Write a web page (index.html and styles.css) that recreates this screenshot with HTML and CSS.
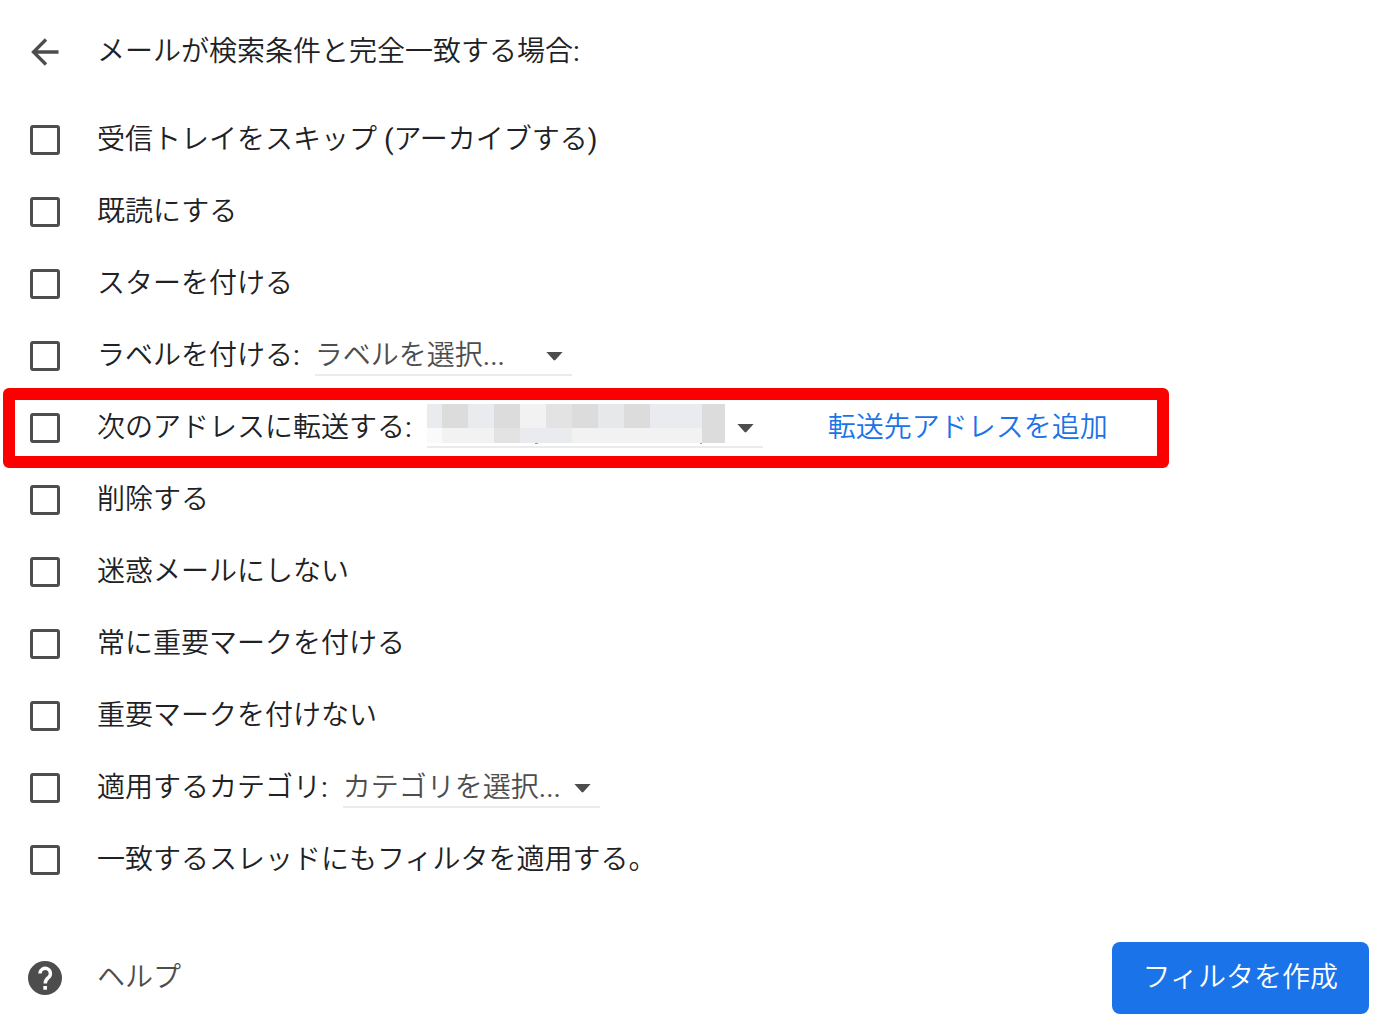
FILE: index.html
```html
<!DOCTYPE html>
<html lang="ja">
<head>
<meta charset="utf-8">
<meta name="viewport" content="width=device-width, initial-scale=1">
<title>フィルタを作成</title>
<link rel="stylesheet" href="styles.css">
</head>
<body>
<form class="filter">
  <header class="row header">
    <button class="icon-button" type="button" aria-label="戻る">
      <svg class="icon" viewBox="0 0 34 34" aria-hidden="true"><path d="M30.500 17H6M18 4.500L5.500 17L18 29.500" fill="none" stroke="#4d4d4d" stroke-width="3.300"/></svg>
    </button>
    <h1 class="text title">メールが検索条件と完全一致する場合:</h1>
  </header>

  <ul class="actions">
    <li class="row"><input class="check" type="checkbox" id="skip"><label class="text" for="skip">受信トレイをスキップ (アーカイブする)</label></li>
    <li class="row"><input class="check" type="checkbox" id="read"><label class="text" for="read">既読にする</label></li>
    <li class="row"><input class="check" type="checkbox" id="star"><label class="text" for="star">スターを付ける</label></li>
    <li class="row">
      <input class="check" type="checkbox" id="label"><label class="text" for="label">ラベルを付ける:</label>
      <span class="picker">
        <select class="select" aria-label="ラベル"><option>ラベルを選択...</option></select>
        <svg class="arrow" viewBox="0 0 18 10" aria-hidden="true"><path d="M0 0h18L10 9q-1 1-2 0z"/></svg>
      </span>
    </li>
    <li class="row highlighted">
      <input class="check" type="checkbox" id="forward"><label class="text" for="forward">次のアドレスに転送する:</label>
      <span class="picker picker-wide">
        <select class="select" aria-label="転送先アドレス"><option></option></select>
        <svg class="mosaic" viewBox="0 0 298 40" shape-rendering="crispEdges" aria-hidden="true">
          <path fill="#e9ebee" d="M0 0h15v24H0zM41 0h26v24H41zM223 0h52v24h-52zM93 24h52v15H93z"/>
          <path fill="#dcdcdc" d="M15 0h26v24H15zM67 0h26v24H67zM145 0h26v24h-26zM197 0h26v24h-26zM275 0h23v39h-23z"/>
          <path fill="#f2f2f2" d="M93 0h26v24H93zM15 24h52v15H15zM145 24h130v15H145z"/>
          <path fill="#e3e3e3" d="M119 0h26v24h-26zM67 24h26v15H67z"/>
          <path fill="#e6e8ea" d="M171 0h26v24h-26z"/>
          <path fill="#fafafa" d="M0 24h15v15H0z"/>
          <path fill="#999" d="M108 39h3v1h-3zM273 39h2v1h-2z"/>
        </svg>
        <svg class="arrow" viewBox="0 0 18 10" aria-hidden="true"><path d="M0 0h18L10 9q-1 1-2 0z"/></svg>
      </span>
      <a class="text add-link" href="#">転送先アドレスを追加</a>
    </li>
    <li class="row"><input class="check" type="checkbox" id="delete"><label class="text" for="delete">削除する</label></li>
    <li class="row"><input class="check" type="checkbox" id="nospam"><label class="text" for="nospam">迷惑メールにしない</label></li>
    <li class="row"><input class="check" type="checkbox" id="important"><label class="text" for="important">常に重要マークを付ける</label></li>
    <li class="row"><input class="check" type="checkbox" id="unimportant"><label class="text" for="unimportant">重要マークを付けない</label></li>
    <li class="row">
      <input class="check" type="checkbox" id="category"><label class="text" for="category">適用するカテゴリ:</label>
      <span class="picker">
        <select class="select" aria-label="カテゴリ"><option>カテゴリを選択...</option></select>
        <svg class="arrow" viewBox="0 0 18 10" aria-hidden="true"><path d="M0 0h18L10 9q-1 1-2 0z"/></svg>
      </span>
    </li>
    <li class="row"><input class="check" type="checkbox" id="threads"><label class="text" for="threads">一致するスレッドにもフィルタを適用する。</label></li>
  </ul>

  <footer class="footer">
    <a class="row help" href="#">
      <svg class="icon" viewBox="0 0 34 34" aria-hidden="true"><circle cx="17" cy="17" r="17" fill="#4d4d4d"/><path d="M12 12.500a5.200 5.200 0 1 1 8.600 3.900C18.500 18.100 17.200 19 17.200 22.500" fill="none" stroke="#fff" stroke-width="3.400"/><path fill="#fff" d="M15.300 25h3.700v3.700h-3.700z"/></svg>
      <span class="text">ヘルプ</span>
    </a>
    <button class="submit" type="submit">フィルタを作成</button>
  </footer>
</form>
</body>
</html>
```
FILE: styles.css
```css
* {
  box-sizing: border-box;
}

body {
  margin: 0;
  background: #fff;
  color: #202124;
  font: 400 28px/40px Roboto, "Noto Sans CJK JP DemiLight", "Noto Sans CJK JP", sans-serif;
}

button,
select {
  font: inherit;
}

.filter {
  padding: 16px 20px 12px 28px;
}

.row {
  display: flex;
  align-items: center;
  height: 72px;
}

.header {
  margin-bottom: 16px;
}

.icon {
  display: block;
  width: 34px;
  height: 34px;
}

.icon-button {
  padding: 0;
  border: 0;
  background: none;
}

.text {
  margin-left: 35px;
  white-space: nowrap;
}

.title {
  margin-top: 0;
  margin-bottom: 0;
  font: inherit;
}

.actions {
  margin: 0 0 46px;
  padding: 0;
  list-style: none;
}

.check {
  appearance: none;
  flex: none;
  width: 30px;
  height: 30px;
  margin: 0 2px;
  border: 3px solid #4d4d4d;
  border-radius: 3px;
}

.check:checked {
  background: #4d4d4d;
}

.picker {
  position: relative;
  width: 257px;
  margin-left: 15px;
}

.picker-wide {
  width: 336px;
}

.select {
  appearance: none;
  display: block;
  width: 100%;
  height: 40px;
  padding: 0;
  border: 0;
  border-bottom: 2px solid #ebebeb;
  border-radius: 0;
  background: none;
  color: #4d4d4d;
}

.arrow {
  position: absolute;
  top: 16px;
  right: 9px;
  width: 17px;
  height: 9px;
  fill: #4d4d4d;
  pointer-events: none;
}

.mosaic {
  position: absolute;
  top: -4px;
  left: 0;
  width: 298px;
  height: 40px;
  pointer-events: none;
}

.highlighted {
  position: relative;
  width: fit-content;
  padding-right: 61px;
}

.highlighted::after {
  content: "";
  position: absolute;
  inset: -4px 0 -4px -25px;
  border: 12px solid #fa0000;
  border-radius: 6px;
  pointer-events: none;
}

.add-link {
  margin-left: 65px;
  color: #1a73e8;
  text-decoration: none;
}

.footer {
  display: flex;
  justify-content: space-between;
}

.help {
  color: #4d4d4d;
  text-decoration: none;
}

.submit {
  height: 72px;
  padding: 0 31px;
  border: 0;
  border-radius: 8px;
  background: #1a73e8;
  color: #fff;
}
```
